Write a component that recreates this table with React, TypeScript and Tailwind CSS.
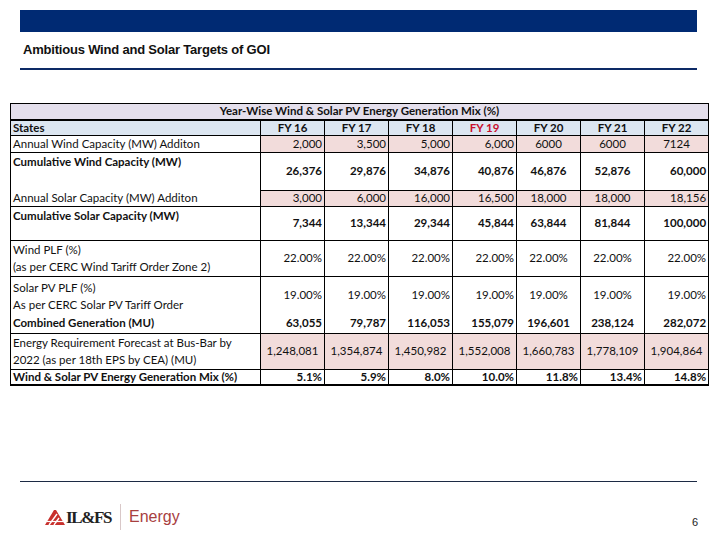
import React from "react";

type Align = "r" | "c";

type Row = {
    label: string[];
    vals: string[];
    align: Align[];
    h: string;
    bold?: boolean;
    pink?: boolean;
    noTopLabel?: boolean;
    noTop?: boolean;
    labelTop?: boolean;
};

const std: Align[] = ["r", "r", "r", "r", "c", "c", "r"];

const rows: Row[] = [
    {
        label: ["Annual Wind Capacity (MW) Additon"],
        vals: ["2,000", "3,500", "5,000", "6,000", "6000", "6000", "7124"],
        align: ["r", "r", "r", "r", "c", "c", "c"],
        h: "h-[17px]",
        pink: true,
    },
    {
        label: ["Cumulative Wind Capacity (MW)"],
        vals: ["26,376", "29,876", "34,876", "40,876", "46,876", "52,876", "60,000"],
        align: std,
        h: "h-[38px]",
        bold: true,
        labelTop: true,
    },
    {
        label: ["Annual Solar Capacity (MW) Additon"],
        vals: ["3,000", "6,000", "16,000", "16,500", "18,000", "18,000", "18,156"],
        align: std,
        h: "h-[16px]",
        pink: true,
        noTopLabel: true,
    },
    {
        label: ["Cumulative Solar Capacity (MW)"],
        vals: ["7,344", "13,344", "29,344", "45,844", "63,844", "81,844", "100,000"],
        align: std,
        h: "h-[34px]",
        bold: true,
        labelTop: true,
    },
    {
        label: ["Wind PLF (%)", "(as per CERC Wind Tariff Order Zone 2)"],
        vals: Array(7).fill("22.00%"),
        align: std,
        h: "h-[36px]",
    },
    {
        label: ["Solar PV PLF (%)", "As per CERC Solar PV Tariff Order"],
        vals: Array(7).fill("19.00%"),
        align: std,
        h: "h-[38px]",
        labelTop: true,
    },
    {
        label: ["Combined Generation (MU)"],
        vals: ["63,055", "79,787", "116,053", "155,079", "196,601", "238,124", "282,072"],
        align: std,
        h: "h-[19px]",
        bold: true,
        noTop: true,
        noTopLabel: true,
    },
    {
        label: ["Energy Requirement Forecast at Bus-Bar by", "2022 (as per 18th EPS by CEA) (MU)"],
        vals: ["1,248,081", "1,354,874", "1,450,982", "1,552,008", "1,660,783", "1,778,109", "1,904,864"],
        align: ["c", "c", "c", "c", "c", "c", "c"],
        h: "h-[36px]",
        pink: true,
    },
    {
        label: ["Wind & Solar PV Energy  Generation Mix (%)"],
        vals: ["5.1%", "5.9%", "8.0%", "10.0%", "11.8%", "13.4%", "14.8%"],
        align: ["r", "r", "r", "r", "r", "r", "r"],
        h: "h-[16px]",
        bold: true,
    },
];

const years = ["FY 16", "FY 17", "FY 18", "FY 19", "FY 20", "FY 21", "FY 22"];

function IlfsMark() {
    return (
        <svg width="20" height="15" viewBox="0 0 20 15">
            <polygon points="0,15 9,0 11,0 20,15" fill="#c8302c" />
            <line x1="4" y1="15" x2="12" y2="4" stroke="#fff" strokeWidth="1.4" />
            <line x1="9" y1="15" x2="14" y2="8" stroke="#fff" strokeWidth="1.4" />
            <line x1="2" y1="11.5" x2="18" y2="11.5" stroke="#fff" strokeWidth="1.2" />
        </svg>
    );
}

export default function App() {
    return (
        <div className="w-[720px] h-[540px] bg-white relative font-['Liberation_Sans',sans-serif] text-[#111]">
            <div className="pt-[10px] px-[20px] pr-[23px]">
                <div className="h-[22px] bg-[#002a73]" />
                <h1 className="mt-[10px] ml-[3px] text-[13px] font-bold tracking-[-0.2px] leading-[16px]">
                    Ambitious Wind and Solar Targets of GOI
                </h1>
                <div className="mt-[10px] h-[2px] bg-[#0d2a66]" />
            </div>

            <div className="ml-[10px] mt-[33px] w-[698px] font-['Lato',sans-serif] text-[11.5px] leading-[14px]">
                <table className="w-[698px] table-fixed border-collapse border-x border-t border-black">
                    <colgroup>
                        <col className="w-[250px]" />
                        {years.map((y) => (
                            <col key={y} className="w-[64px]" />
                        ))}
                    </colgroup>
                    <tbody>
                        <tr className="h-[16px] bg-[#e4dfec]">
                            <td colSpan={8} className="text-center font-bold border-b-2 border-black">
                                Year-Wise Wind &amp; Solar PV Energy Generation Mix (%)
                            </td>
                        </tr>
                        <tr className="h-[15px] bg-[#dce6f1] font-bold">
                            <td className="pl-[2px] border-b border-black">States</td>
                            {years.map((y) => (
                                <td
                                    key={y}
                                    className={`text-center border-l border-b border-black ${y === "FY 19" ? "text-[#c8102e]" : ""}`}
                                >
                                    {y}
                                </td>
                            ))}
                        </tr>
                        {rows.map((r, i) => (
                            <tr key={i} className={r.h}>
                                <td
                                    className={`pl-[2px] border-black ${r.labelTop ? "align-top pt-[2px]" : "align-middle"} ${r.bold ? "font-bold" : ""} ${r.noTopLabel ? "" : "border-t"} ${i === rows.length - 1 ? "border-b-2" : ""}`}
                                >
                                    {r.label.map((l) => (
                                        <div key={l} className={r.label.length > 1 ? "leading-[17px]" : ""}>
                                            {l}
                                        </div>
                                    ))}
                                </td>
                                {r.vals.map((v, j) => (
                                    <td
                                        key={j}
                                        className={`border-l border-black align-middle ${r.noTop ? "" : "border-t"} ${r.pink ? "bg-[#f2dcdb]" : ""} ${r.bold ? "font-bold" : ""} ${r.align[j] === "r" ? "text-right pr-[2px]" : "text-center"} ${i === rows.length - 1 ? "border-b-2" : ""}`}
                                    >
                                        {v}
                                    </td>
                                ))}
                            </tr>
                        ))}
                    </tbody>
                </table>
            </div>

            <div className="absolute left-[20px] right-[23px] top-[481px] h-px bg-[#1c2a44]" />

            <div className="absolute left-[45px] top-[504px] flex items-center">
                <IlfsMark />
                <span className="ml-[1px] font-['Liberation_Serif',serif] font-bold text-[17px] tracking-[-1.4px] text-[#222] leading-none">
                    IL&amp;FS
                </span>
                <span className="ml-[9px] w-px h-[26px] bg-[#d9c8c8]" />
                <span className="ml-[8px] font-['Liberation_Sans',sans-serif] text-[16px] text-[#a8403f] leading-none">
                    Energy
                </span>
            </div>

            <div className="absolute left-[692px] top-[514px] text-[11px] font-['Liberation_Sans',sans-serif] text-[#222]">
                6
            </div>
        </div>
    );
}
